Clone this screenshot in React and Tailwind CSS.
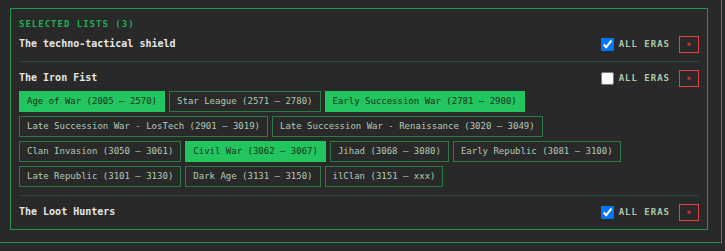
import { useState } from 'react';

const ERAS = [
  'Age of War (2005 – 2570)',
  'Star League (2571 – 2780)',
  'Early Succession War (2781 – 2900)',
  'Late Succession War - LosTech (2901 – 3019)',
  'Late Succession War - Renaissance (3020 – 3049)',
  'Clan Invasion (3050 – 3061)',
  'Civil War (3062 – 3067)',
  'Jihad (3068 – 3080)',
  'Early Republic (3081 – 3100)',
  'Late Republic (3101 – 3130)',
  'Dark Age (3131 – 3150)',
  'ilClan (3151 – xxx)',
];

const LISTAS_INICIAIS = [
  { id: 1, nome: 'The techno-tactical shield', todas: true, eras: [] },
  { id: 2, nome: 'The Iron Fist', todas: false, eras: [0, 2, 6] },
  { id: 3, nome: 'The Loot Hunters', todas: true, eras: [] },
];

function EraChip({ label, ativo, onClick }) {
  return (
    <button
      type="button"
      onClick={onClick}
      className={
        ativo
          ? 'h-[21px] px-[7px] text-[9px] leading-[19px] border border-[#22c55e] bg-[#22c55e] text-[#17331f] whitespace-nowrap'
          : 'h-[21px] px-[7px] text-[9px] leading-[19px] border border-[#2b7a44] bg-transparent text-[#b3c9b7] whitespace-nowrap'
      }
    >
      {label}
    </button>
  );
}

function ListaRow({ lista, onToggleTodas, onToggleEra }) {
  return (
    <div>
      <div className="flex items-center h-[17px]">
        <span className="flex-1 text-[10px] font-bold leading-[14px] mb-[1px] text-[#e6e6e6]">
          {lista.nome}
        </span>
        <label className="flex items-center gap-[5px] mr-[9px]">
          <input
            type="checkbox"
            checked={lista.todas}
            onChange={onToggleTodas}
            className="w-[13px] h-[13px] m-0"
          />
          <span className="text-[9px] font-bold tracking-[1px] text-[#a9c8ad]">ALL ERAS</span>
        </label>
        <button
          type="button"
          className="w-[20px] h-[17px] border border-[#e04444] text-[#e04444] text-[8px] leading-none flex items-center justify-center"
        >
          ×
        </button>
      </div>
      {!lista.todas && (
        <div className="flex flex-wrap gap-x-[4px] gap-y-[4px] mt-[4px]">
          {ERAS.map((era, i) => (
            <EraChip
              key={era}
              label={era}
              ativo={lista.eras.includes(i)}
              onClick={() => onToggleEra(i)}
            />
          ))}
        </div>
      )}
    </div>
  );
}

export default function App() {
  const [listas, setListas] = useState(LISTAS_INICIAIS);

  const toggleTodas = (id) =>
    setListas((ls) => ls.map((l) => (l.id === id ? { ...l, todas: !l.todas } : l)));

  const toggleEra = (id, i) =>
    setListas((ls) =>
      ls.map((l) =>
        l.id === id
          ? { ...l, eras: l.eras.includes(i) ? l.eras.filter((e) => e !== i) : [...l.eras, i] }
          : l
      )
    );

  return (
    <div
      className="w-[725px] h-[251px] bg-[#292929]"
      style={{ fontFamily: '"DejaVu Sans Mono", "Liberation Mono", monospace' }}
    >
      <div className="w-[722px] h-[243px] border-r border-b border-[#25934a] pl-[10px] pt-[8px]">
        <section className="w-[698px] border border-[#25934a] px-[8px] pt-[8px]">
          <h2 className="h-[14px] text-[9px] font-bold leading-[14px] tracking-[1px] text-[#1fb052]">
            SELECTED LISTS ({listas.length})
          </h2>
          {listas.map((lista, idx) => (
            <div
              key={lista.id}
              className={
                idx === 0
                  ? 'pt-[5px] pb-[8px]'
                  : 'pt-[8px] pb-[8px] border-t border-[#2f4a36]'
              }
            >
              <ListaRow
                lista={lista}
                onToggleTodas={() => toggleTodas(lista.id)}
                onToggleEra={(i) => toggleEra(lista.id, i)}
              />
            </div>
          ))}
        </section>
      </div>
    </div>
  );
}
